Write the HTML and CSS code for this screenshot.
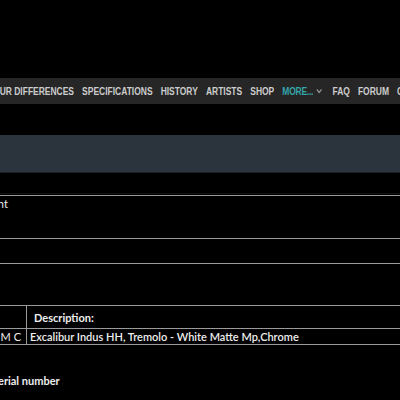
FILE: index.html
```html
<!DOCTYPE html>
<html>
<head>
<meta charset="utf-8">
<link rel="stylesheet" href="styles.css">
</head>
<body>
<div class="top"></div>
<nav class="menu">
  <div class="menu-inner">
    <span class="item first">OUR DIFFERENCES</span>
    <span class="item">SPECIFICATIONS</span>
    <span class="item">HISTORY</span>
    <span class="item">ARTISTS</span>
    <span class="item">SHOP</span>
    <span class="item more">MORE...</span>
    <svg class="chev" width="9" height="6" viewBox="0 0 9 6"><path d="M1.5 1.5l3 3 3-3" fill="none" stroke="#9a9a9a" stroke-width="1.4"/></svg>
    <span class="item">FAQ</span>
    <span class="item">FORUM</span>
    <span class="item">CONTACT</span>
  </div>
</nav>
<div class="banner"></div>
<div class="table">
  <div class="row r1"><span class="cut1">Instrument</span></div>
  <div class="row r2"></div>
  <div class="row r3"></div>
  <div class="row r4"><div class="c1"></div><div class="c2 head">Description:</div></div>
  <div class="row r5"><div class="c1"><span class="cut2">SCHECTER M C</span></div><div class="c2 val">Excalibur Indus HH, Tremolo - White Matte Mp,Chrome</div></div>
</div>
<h3 class="serial"><span class="cut3">Serial number</span></h3>
</body>
</html>
```
FILE: styles.css
```css
html, body { margin: 0; padding: 0; background: #000; overflow: hidden; }
body { width: 400px; height: 400px; font-family: Lato, "Open Sans", sans-serif; color: #eee; }
.top { height: 78px; }
.menu { height: 26px; background: #262626; overflow: hidden; display: flex; align-items: center; }
.menu-inner { display: flex; align-items: center; gap: 10.5px; white-space: nowrap; font-family: "Liberation Sans", Arial, sans-serif; font-weight: bold; font-size: 11px; color: #cccccc; transform: scaleX(0.77); transform-origin: left center; }
.item.first { margin-left: -9px; }
.more { color: #35a4a8; letter-spacing: -0.3px; }
.chev { margin-left: -7px; margin-right: 2px; }
.banner { margin-top: 31px; height: 37px; background: #2b333c; border-bottom: 1px solid #1c2026; }
.table { margin-top: 20px; border-top: 1px solid #111; padding-top: 1px; }
.row { border-top: 1px solid #9a9a9a; display: flex; font-size: 11px; overflow: hidden; white-space: nowrap; box-sizing: border-box; }
.r1 { height: 43px; align-items: flex-start; padding-top: 1px; }
.cut1 { margin-left: -45px; }
.r2 { height: 25px; }
.r3 { height: 42px; }
.r4 { height: 23px; }
.r5 { height: 17px; border-bottom: 1px solid #9a9a9a; }
.c1 { width: 26px; border-right: 1px solid #9a9a9a; flex: none; overflow: hidden; display: flex; justify-content: flex-end; align-items: center; }
.c2 { display: flex; align-items: center; }
.head { font-weight: bold; padding-left: 7px; }
.val { font-weight: 600; padding-left: 3px; }
.cut2 { padding-right: 5px; }
.serial { margin: 29px 0 0; font-size: 11px; line-height: 14px; font-weight: bold; white-space: nowrap; }
.cut3 { margin-left: -8px; }
```
